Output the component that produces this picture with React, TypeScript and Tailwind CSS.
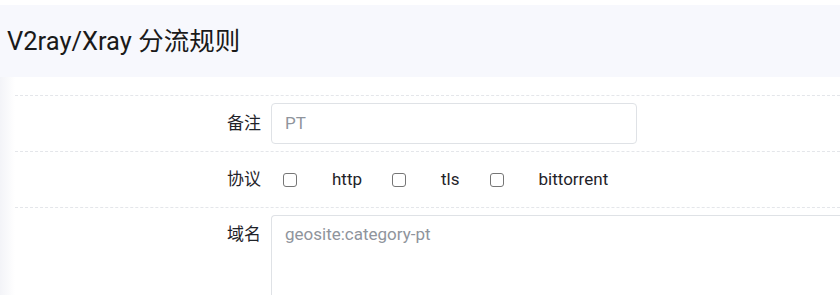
const font = { fontFamily: 'Roboto, "Noto Sans CJK SC", sans-serif' };

function Check({ label }: { label: string }) {
  return (
    <label className="flex items-center">
      <span className="mr-[35px] h-[14px] w-[14px] rounded-[3px] border border-[#767676] bg-white" />
      <span className="mr-[30px] text-[17px] text-[#1f2329]">{label}</span>
    </label>
  );
}

export default function App() {
  return (
    <div className="h-[295px] w-[840px] overflow-hidden bg-white pt-[5px]" style={font}>
      <div className="flex h-[72px] items-center bg-[#f7f8fd] pl-[7px]">
        <h1 className="text-[25.5px] font-normal text-[#1a1a1a]">V2ray/Xray 分流规则</h1>
      </div>
      <div className="flex">
        <div className="h-[218px] w-[15px] shrink-0 bg-gradient-to-r from-[#f3f4f8] to-white" />
        <div className="flex-1 pt-[18px]">
          <div className="flex h-[56px] items-center border-t border-dashed border-[#e4e6ea]">
            <div className="w-[256px] pr-[10px] text-right text-[17px] text-[#1f2329]">备注</div>
            <div className="flex h-[41px] w-[366px] items-center rounded-[4px] border border-[#dfe2e6] px-[13px] text-[17px] text-[#8f949c]">
              PT
            </div>
          </div>
          <div className="flex h-[56px] items-center border-t border-dashed border-[#e4e6ea]">
            <div className="w-[256px] pr-[10px] text-right text-[17px] text-[#1f2329]">协议</div>
            <div className="flex items-center pl-[12px]">
              <Check label="http" />
              <Check label="tls" />
              <Check label="bittorrent" />
            </div>
          </div>
          <div className="flex border-t border-dashed border-[#e4e6ea] pt-[7px]">
            <div className="w-[256px] pr-[10px] pt-[7px] text-right text-[17px] text-[#1f2329]">域名</div>
            <div className="h-[100px] flex-1 rounded-tl-[4px] border-l border-t border-[#dfe2e6] px-[13px] pt-[6px] text-[17px] text-[#8f949c]">
              geosite:category-pt
            </div>
          </div>
        </div>
      </div>
    </div>
  );
}
